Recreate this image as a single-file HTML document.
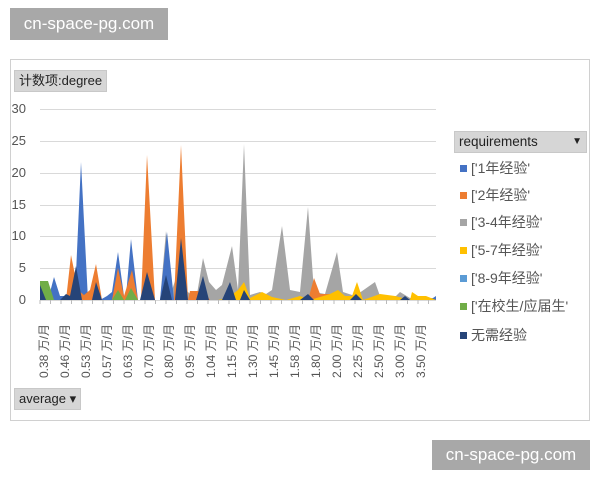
<!DOCTYPE html>
<html><head><meta charset="utf-8"><style>
body{margin:0;width:600px;height:480px;background:#fff;position:relative;overflow:hidden;font-family:"Liberation Sans","Noto Sans CJK SC",sans-serif}
.wm{position:absolute;background:#a8a8a8;color:#fff;font-size:17px;display:flex;align-items:center;justify-content:center}
.frame{position:absolute;left:10px;top:59px;width:578px;height:360px;border:1px solid #d0d0d0}
.btn{position:absolute;background:#d6d6d6;color:#222;font-size:13px;line-height:20px;padding:0 4px;border:1px solid #c8c8c8}
.lg{position:absolute;left:460px;font-size:14px;color:#555}
.lg i{display:inline-block;width:7px;height:7px;margin-right:4px;vertical-align:1px}
.xl{position:absolute;top:378px;font-size:12px;color:#555;transform-origin:0 0;transform:rotate(-90deg);white-space:nowrap}
.yl{position:absolute;left:0;width:26px;text-align:right;font-size:13px;color:#555}
</style></head><body>
<div class="wm" style="left:10px;top:8px;width:158px;height:32px">cn-space-pg.com</div>
<div class="wm" style="left:432px;top:440px;width:158px;height:30px">cn-space-pg.com</div>
<div class="frame"></div>
<div class="btn" style="left:14px;top:70px">计数项:degree</div>
<div class="btn" style="left:14px;top:388px">average ▾</div>
<div class="btn" style="left:454px;top:131px;width:123px;font-size:13.5px">requirements<span style="float:right;font-size:10px">▼</span></div>
<div class="lg" style="top:158px"><i style="background:#4472c4"></i>['1年经验'</div>
<div class="lg" style="top:185px"><i style="background:#ed7d31"></i>['2年经验'</div>
<div class="lg" style="top:212px"><i style="background:#a5a5a5"></i>['3-4年经验'</div>
<div class="lg" style="top:240px"><i style="background:#ffc000"></i>['5-7年经验'</div>
<div class="lg" style="top:268px"><i style="background:#5b9bd5"></i>['8-9年经验'</div>
<div class="lg" style="top:296px"><i style="background:#70ad47"></i>['在校生/应届生'</div>
<div class="lg" style="top:325px"><i style="background:#264478"></i>无需经验</div>
<div class="yl" style="top:101px">30</div><div class="yl" style="top:133px">25</div><div class="yl" style="top:165px">20</div><div class="yl" style="top:197px">15</div><div class="yl" style="top:228px">10</div><div class="yl" style="top:260px">5</div><div class="yl" style="top:292px">0</div>
<svg width="600" height="480" style="position:absolute;left:0;top:0">
<g stroke="#d9d9d9" stroke-width="1">
<line x1="40" x2="436" y1="109.5" y2="109.5"/><line x1="40" x2="436" y1="141.5" y2="141.5"/><line x1="40" x2="436" y1="173.5" y2="173.5"/><line x1="40" x2="436" y1="205.5" y2="205.5"/><line x1="40" x2="436" y1="236.5" y2="236.5"/><line x1="40" x2="436" y1="268.5" y2="268.5"/><line x1="40" x2="436" y1="300.5" y2="300.5"/>
</g>
<polygon fill="#a5a5a5" points="40,300 160,300 166,231 172,290 176,278 181,237 186,290 196,300 203,258 209,282 216,290 222,285 232,246 238,290 244,144 250,295 260,292 266,294 272,290 282,226 290,290 300,292 308,207 314,292 325,294 337,252 343,292 355,296 375,282 380,296 396,296 400,292 410,298 436,298 436,300"/>
<polygon fill="#4472c4" points="40,300 48,300 54,277 60,296 70,296 75,296 81,162 88,300 100,300 107,296 112,292 118,252 124,296 126,296 131,239 138,300 160,300 167,232 174,300 436,300 436,296 430,300"/>
<polygon fill="#ed7d31" points="40,300 66,300 71,255 78,290 84,295 90,290 96,264 102,300 112,300 118,268 124,296 132,270 138,300 141,300 147,155 155,300 174,300 181,145 188,300 190,291 204,291 210,300 308,300 314,278 320,294 330,294 336,300"/>
<polygon fill="#ffc000" points="218,300 228,298 238,290 244,282 250,298 262,292 272,297 286,300 300,296 310,300 330,294 338,290 345,296 352,296 357,282 363,300 380,294 395,296 410,300 412,292 418,296 426,296 436,300"/>
<polygon fill="#70ad47" points="40,300 40,281 48,281 54,300 112,300 118,290 124,300 125,300 131,288 138,300"/>
<polygon fill="#264478" points="40,300 40,285 46,300 60,300 66,294 70,296 76,266 82,300 92,300 96,282 102,300 140,300 147,272 155,300 160,300 166,275 172,300 175,300 181,238 188,300 196,300 203,276 209,300 222,300 230,282 236,300 240,300 244,290 250,300 300,300 308,294 314,300 350,300 356,294 362,300 400,300 405,296 410,300"/>
<g stroke="#bbb"><path d="M40,300v4M50.5,300v4M61,300v4M71.5,300v4M82,300v4M92.5,300v4M103,300v4M113.5,300v4M124,300v4M134.5,300v4M145,300v4M155.5,300v4M166,300v4M176.5,300v4M187,300v4M197.5,300v4M208,300v4M218.5,300v4M229,300v4M239.5,300v4M250,300v4M260.5,300v4M271,300v4M281.5,300v4M292,300v4M302.5,300v4M313,300v4M323.5,300v4M334,300v4M344.5,300v4M355,300v4M365.5,300v4M376,300v4M386.5,300v4M397,300v4M407.5,300v4M418,300v4M428.5,300v4"/></g>
</svg>
<div class="xl" style="left:35px">0.38 万/月</div><div class="xl" style="left:56px">0.46 万/月</div><div class="xl" style="left:77px">0.53 万/月</div><div class="xl" style="left:98px">0.57 万/月</div><div class="xl" style="left:119px">0.63 万/月</div><div class="xl" style="left:140px">0.70 万/月</div><div class="xl" style="left:160px">0.80 万/月</div><div class="xl" style="left:181px">0.95 万/月</div><div class="xl" style="left:202px">1.04 万/月</div><div class="xl" style="left:223px">1.15 万/月</div><div class="xl" style="left:244px">1.30 万/月</div><div class="xl" style="left:265px">1.45 万/月</div><div class="xl" style="left:286px">1.58 万/月</div><div class="xl" style="left:307px">1.80 万/月</div><div class="xl" style="left:328px">2.00 万/月</div><div class="xl" style="left:349px">2.25 万/月</div><div class="xl" style="left:370px">2.50 万/月</div><div class="xl" style="left:391px">3.00 万/月</div><div class="xl" style="left:412px">3.50 万/月</div>
</body></html>
